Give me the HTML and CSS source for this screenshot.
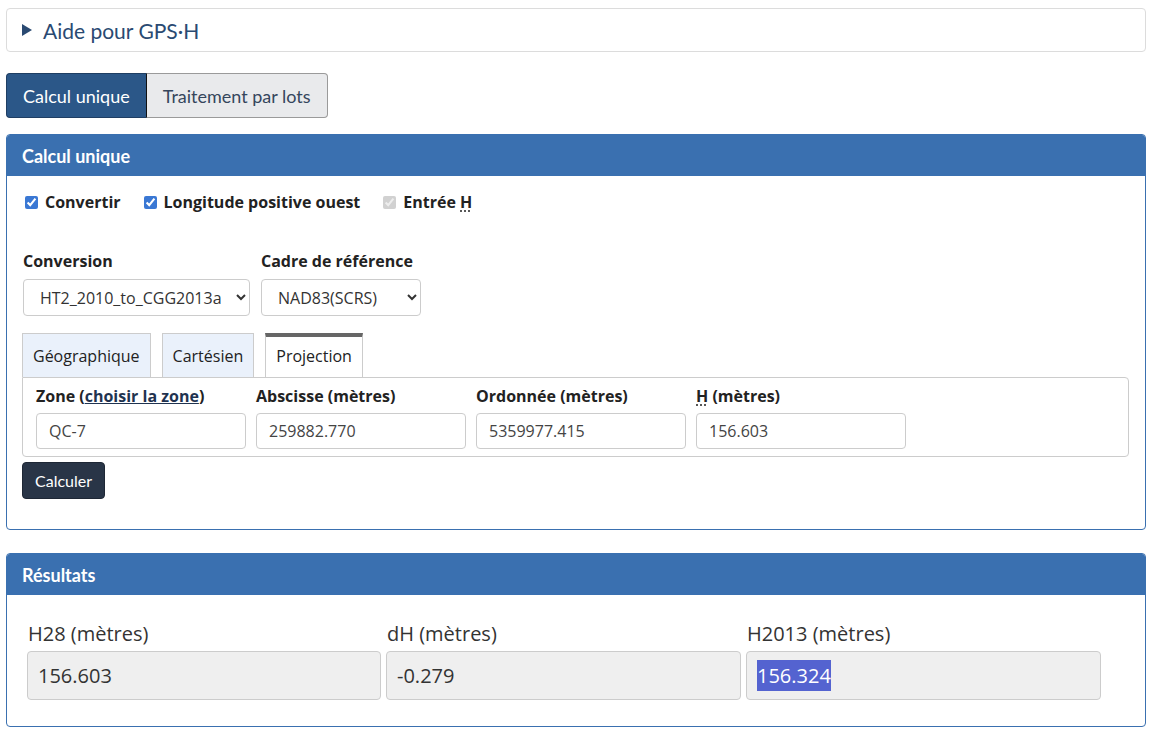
FILE: index.html
```html
<!DOCTYPE html>
<html lang="fr">
<head>
<meta charset="utf-8">
<title>GPS·H</title>
<link rel="stylesheet" href="styles.css">
</head>
<body>
<div class="page">
  <details class="help">
    <summary><svg class="tri" width="10" height="12" viewBox="0 0 10 12"><polygon points="0,0 10,6 0,12" fill="currentColor"/></svg>Aide pour GPS·H</summary>
  </details>

  <div class="modebar">
    <button class="mode active">Calcul unique</button>
    <button class="mode">Traitement par lots</button>
  </div>

  <section class="panel">
    <div class="panel-head">Calcul unique</div>
    <div class="panel-body calc">
      <div class="checks">
        <label class="chk"><input type="checkbox" checked><span>Convertir</span></label>
        <label class="chk"><input type="checkbox" checked><span>Longitude positive ouest</span></label>
        <label class="chk dis"><input type="checkbox" checked disabled><span>Entrée <abbr title="Hauteur">H</abbr></span></label>
      </div>

      <div class="selects">
        <div class="field">
          <label class="flabel">Conversion</label>
          <select class="sel sel-conv"><option>HT2_2010_to_CGG2013a</option></select>
        </div>
        <div class="field">
          <label class="flabel">Cadre de référence</label>
          <select class="sel sel-ref"><option>NAD83(SCRS)</option></select>
        </div>
      </div>

      <div class="tabs">
        <div class="tab">Géographique</div>
        <div class="tab">Cartésien</div>
        <div class="tab current">Projection</div>
      </div>
      <div class="tabpane">
        <div class="field">
          <label class="flabel">Zone (<a href="#" class="lnk">choisir la zone</a>)</label>
          <input class="inp" type="text" value="QC-7">
        </div>
        <div class="field">
          <label class="flabel">Abscisse (mètres)</label>
          <input class="inp" type="text" value="259882.770">
        </div>
        <div class="field">
          <label class="flabel">Ordonnée (mètres)</label>
          <input class="inp" type="text" value="5359977.415">
        </div>
        <div class="field">
          <label class="flabel"><abbr title="Hauteur">H</abbr> (mètres)</label>
          <input class="inp" type="text" value="156.603">
        </div>
      </div>
      <button class="calc-btn">Calculer</button>
    </div>
  </section>

  <section class="panel results">
    <div class="panel-head">Résultats</div>
    <div class="panel-body res">
      <div class="rcol">
        <div class="rlabel">H28 (mètres)</div>
        <div class="rbox">156.603</div>
      </div>
      <div class="rcol">
        <div class="rlabel">dH (mètres)</div>
        <div class="rbox">-0.279</div>
      </div>
      <div class="rcol">
        <div class="rlabel">H2013 (mètres)</div>
        <div class="rbox"><span class="sel-text">156.324</span></div>
      </div>
    </div>
  </section>
</div>
</body>
</html>
```

FILE: styles.css
```css
html, body {
  margin: 0;
  padding: 0;
  background: #fff;
}
body {
  font-family: "Open Sans", "Noto Sans", sans-serif;
  color: #222;
}
.page {
  padding: 8px 14px 0 6px;
}

/* help */
.help {
  border: 1px solid #dcdcdc;
  border-radius: 4px;
  box-sizing: border-box;
  height: 44px;
}
.help summary {
  list-style: none;
  display: flex;
  align-items: center;
  height: 42px;
  padding-left: 15px;
  font-family: Lato, sans-serif;
  font-size: 21px;
  color: #2a4a72;
  cursor: pointer;
}
.help summary::-webkit-details-marker { display: none; }
.tri {
  margin-right: 11px;
  color: #2a4a72;
  flex: none;
}

/* mode buttons */
.modebar {
  display: flex;
  margin-top: 21px;
}
.mode {
  font-family: Lato, sans-serif;
  font-size: 18px;
  height: 45px;
  padding: 0 16px;
  border: 1px solid #9a9a9a;
  background: #e9eaec;
  color: #35465c;
  margin: 0;
}
.mode.active {
  background: #2b5788;
  color: #fff;
  border-color: #1f3e63;
  border-right-color: #111;
  border-radius: 4px 0 0 4px;
}
.mode:last-child {
  border-left: none;
  border-radius: 0 4px 4px 0;
}

/* panels */
.panel {
  margin-top: 16px;
  border: 1px solid #3a70b0;
  border-radius: 4px;
  overflow: hidden;
}
.results {
  margin-top: 23px;
}
.panel-head {
  background: #3a70b0;
  color: #fff;
  font-family: Lato, sans-serif;
  font-weight: 700;
  font-size: 18px;
  height: 41px;
  display: flex;
  align-items: center;
  padding-left: 15px;
}
.calc {
  padding: 16px 16px 30px 16px;
}

/* checks */
.checks {
  display: flex;
  gap: 21px;
  height: 20px;
  align-items: center;
}
.chk {
  display: inline-flex;
  align-items: center;
  font-weight: 700;
  font-size: 16px;
  color: #222;
}
.chk input {
  accent-color: #3a78d4;
  margin: 0 7px 0 2px;
  width: 13px;
  height: 13px;
}
abbr {
  text-decoration: underline dotted;
  text-underline-offset: 3px;
}

/* selects */
.selects {
  display: flex;
  gap: 11px;
  margin-top: 39px;
}
.field {
  display: flex;
  flex-direction: column;
}
.flabel {
  font-weight: 700;
  font-size: 16px;
  color: #222;
  line-height: 20px;
  height: 20px;
}
.sel {
  margin-top: 8px;
  height: 37px;
  border: 1px solid #ccc;
  border-radius: 4px;
  background: #fff;
  font-family: "Open Sans", sans-serif;
  font-size: 16px;
  color: #333;
  padding: 0 6px 0 12px;
}
.sel-conv { width: 227px; }
.sel-ref { width: 160px; }

/* tabs */
.tabs {
  display: flex;
  gap: 11px;
  margin-top: 17px;
  margin-left: -1px;
}
.tab {
  height: 43px;
  padding: 0 10px;
  display: flex;
  align-items: center;
  background: #eaf1fb;
  border: 1px solid #ccc;
  border-bottom: none;
  font-size: 16px;
  color: #222;
}
.tab.current {
  background: #fff;
  border-top: 4px solid #666;
  height: 37px;
  padding-bottom: 3px;
  margin-bottom: -1px;
  position: relative;
  z-index: 1;
}
.tabpane {
  display: flex;
  gap: 10px;
  border: 1px solid #ccc;
  border-radius: 0 4px 4px 4px;
  padding: 8px 12px 7px 13px;
  margin-left: -1px;
}
.tabpane .field {
  width: 210px;
}
.lnk {
  color: #1f3350;
  text-decoration: underline;
}
.inp {
  margin-top: 7px;
  height: 36px;
  box-sizing: border-box;
  border: 1px solid #ccc;
  border-radius: 4px;
  font-family: "Open Sans", sans-serif;
  font-size: 16px;
  color: #444;
  padding: 0 12px;
  width: 210px;
}
.calc-btn {
  margin-top: 5px;
  margin-left: -1px;
  height: 37px;
  padding: 0 12px;
  background: #293547;
  color: #fff;
  border: 1px solid #1e2735;
  border-radius: 4px;
  font-family: Lato, sans-serif;
  font-size: 16px;
}

/* results */
.res {
  display: grid;
  grid-template-columns: 354px 355px 355px;
  gap: 5px;
  padding: 27px 0 26px 20px;
}
.rlabel {
  font-size: 20px;
  color: #333;
  line-height: 24px;
  margin-left: 1px;
}
.rbox {
  margin-top: 5px;
  height: 49px;
  box-sizing: border-box;
  background: #efefef;
  border: 1px solid #ccc;
  border-radius: 4px;
  font-size: 20px;
  color: #333;
  display: flex;
  align-items: center;
  padding-left: 10px;
}
.sel-text {
  background: #5463d0;
  color: #fff;
  padding: 2px 0;
}
```
